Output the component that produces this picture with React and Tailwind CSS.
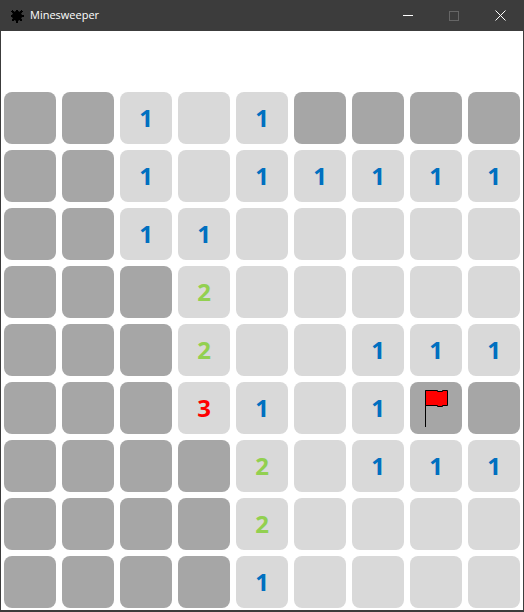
import React from 'react';

// h = hidden, f = flagged, '' = open and empty
const board = [
  ['h', 'h', '1', '', '1', 'h', 'h', 'h', 'h'],
  ['h', 'h', '1', '', '1', '1', '1', '1', '1'],
  ['h', 'h', '1', '1', '', '', '', '', ''],
  ['h', 'h', 'h', '2', '', '', '', '', ''],
  ['h', 'h', 'h', '2', '', '', '1', '1', '1'],
  ['h', 'h', 'h', '3', '1', '', '1', 'f', 'h'],
  ['h', 'h', 'h', 'h', '2', '', '1', '1', '1'],
  ['h', 'h', 'h', 'h', '2', '', '', '', ''],
  ['h', 'h', 'h', 'h', '1', '', '', '', ''],
];

const numberColors = {
  1: 'text-[#0070c0]',
  2: 'text-[#92d050]',
  3: 'text-[#ff0000]',
};

function MineIcon() {
  return (
    <svg width="14" height="14" viewBox="0 0 14 14" className="shrink-0">
      <rect x="3" y="3" width="8" height="8" fill="#000" />
      <circle cx="7" cy="7" r="5" fill="#000" />
      <path
        d="M7 .5v13M.5 7h13M2 2l10 10M12 2L2 12"
        stroke="#000"
        strokeWidth="1.5"
        shapeRendering="crispEdges"
      />
    </svg>
  );
}

function Flag() {
  return (
    <svg width="26" height="46" viewBox="0 0 26 46" className="block">
      <path d="M2.5 8.5V45" stroke="#000" strokeWidth="1" fill="none" />
      <path
        d="M2.5 8.5H14.5V9.5H19.5V8.5H24.5V23.5H19.5V24.5H14.5V23.5H2.5Z"
        fill="#ff0000"
        stroke="#000"
        strokeWidth="1"
      />
    </svg>
  );
}

function Cell({ value }) {
  if (value === 'h') {
    return <div className="w-[52px] h-[52px] rounded-[8px] bg-[#a6a6a6]" />;
  }
  if (value === 'f') {
    return (
      <div className="w-[52px] h-[52px] rounded-[8px] bg-[#a6a6a6] flex items-start pl-[13px]">
        <Flag />
      </div>
    );
  }
  return (
    <div
      className={`w-[52px] h-[52px] rounded-[8px] bg-[#d9d9d9] flex items-center justify-center text-[24px] font-bold font-['Open_Sans',sans-serif] leading-none ${numberColors[value] || ''}`}
    >
      {value}
    </div>
  );
}

export default function App() {
  return (
    <div className="w-[524px] h-[612px] flex flex-col bg-[#3c3c3c] overflow-hidden">
      {/* Title bar */}
      <div className="h-[31px] shrink-0 flex items-center justify-between text-white pr-px">
        <div className="flex items-center gap-[6px] pl-[10px]">
          <MineIcon />
          <span className="font-['Open_Sans',sans-serif] text-[11px]">Minesweeper</span>
        </div>
        <div className="flex items-center h-full">
          <div className="w-[46px] h-full flex items-center justify-center">
            <div className="w-[10px] h-px bg-white" />
          </div>
          <div className="w-[46px] h-full flex items-center justify-center">
            <div className="w-[10px] h-[10px] border border-[#666666]" />
          </div>
          <div className="w-[46px] h-full flex items-center justify-center">
            <svg width="11" height="11" viewBox="0 0 11 11">
              <path d="M0.5 0.5L10.5 10.5M10.5 0.5L0.5 10.5" stroke="#fff" strokeWidth="1" />
            </svg>
          </div>
        </div>
      </div>

      {/* Game area */}
      <div className="flex-1 bg-white ml-px mr-px mb-[2px] pt-[61px] pl-[3px]">
        <div className="grid grid-cols-[repeat(9,52px)] auto-rows-[52px] gap-[6px]">
          {board.flat().map((value, i) => (
            <Cell key={i} value={value} />
          ))}
        </div>
      </div>
    </div>
  );
}
